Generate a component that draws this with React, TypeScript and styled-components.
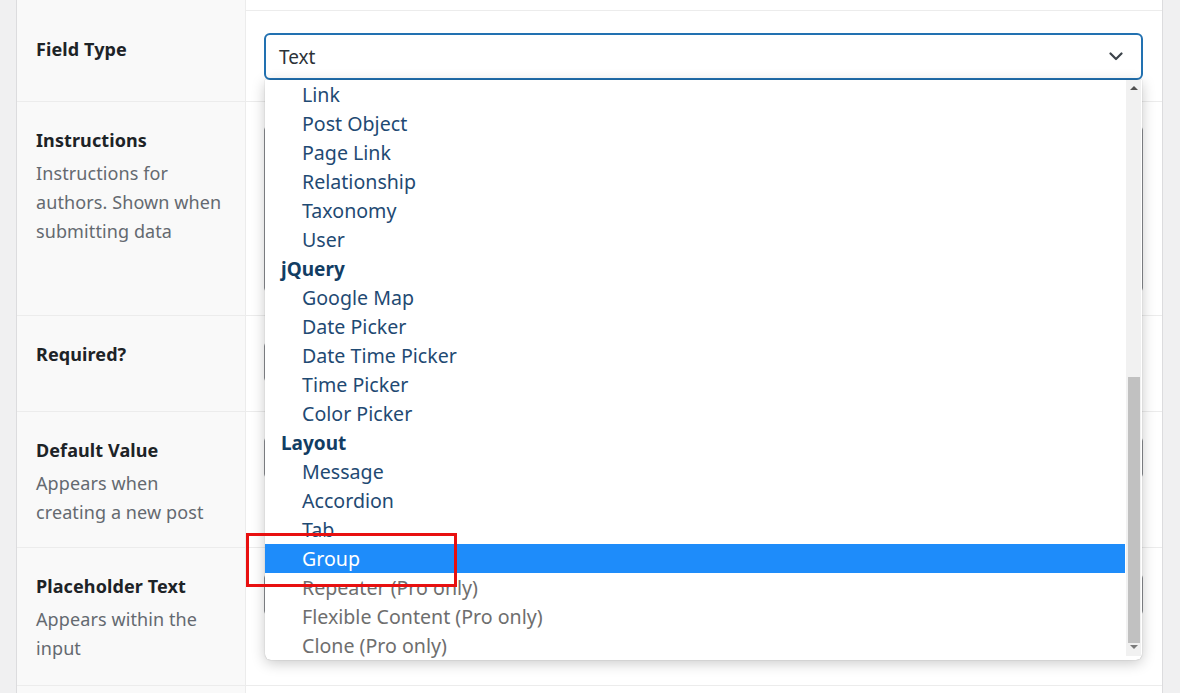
import React from 'react';
import styled, { createGlobalStyle } from 'styled-components';

const GlobalStyle = createGlobalStyle`
  html, body {
    margin: 0;
    padding: 0;
    background: #f0f0f1;
    font-family: "Noto Sans", "Open Sans", sans-serif;
    overflow: hidden;
  }
`;

const Page = styled.div`
  height: 693px;
  overflow: hidden;
  padding-left: 16px;
  padding-right: 17px;
`;

const Panel = styled.div`
  background: #fff;
  border-left: 1px solid #dcdcde;
  border-right: 1px solid #dcdcde;
`;

const Row = styled.div<{ $h: number }>`
  display: grid;
  grid-template-columns: 229px 1fr;
  height: ${p => p.$h}px;
  border-bottom: 1px solid #ececec;
`;

const LabelCell = styled.div`
  background: #f9f9f9;
  border-right: 1px solid #ececec;
  padding: 24px 18px 0 19px;
`;

const LabelTitle = styled.div`
  font-size: 18px;
  line-height: 29px;
  font-weight: 700;
  color: #1d2327;
  letter-spacing: 0.1px;
`;

const LabelHint = styled.div`
  margin-top: 4px;
  font-size: 18px;
  line-height: 29px;
  color: #646970;
  letter-spacing: 0.1px;
`;

const InputCell = styled.div<{ $top?: number }>`
  padding: ${p => p.$top ?? 24}px 19px 0 18px;
  position: relative;
`;

const Input = styled.div<{ $h: number }>`
  height: ${p => p.$h}px;
  border: 1px solid #8c8f94;
  border-radius: 4px;
  box-sizing: border-box;
`;

const Toggle = styled.div`
  width: 80px;
  height: 40px;
  border: 1px solid #8c8f94;
  border-radius: 4px;
  box-sizing: border-box;
`;

const Select = styled.div`
  height: 47px;
  border: 2px solid #2271b1;
  border-radius: 6px;
  box-sizing: border-box;
  display: flex;
  align-items: center;
  justify-content: space-between;
  padding: 0 18px 0 13px;
  font-size: 19px;
  color: #2c3338;
  background: #fff;
`;

const Dropdown = styled.div`
  position: absolute;
  left: 19px;
  top: 69px;
  width: 877px;
  height: 580px;
  background: #fff;
  border-radius: 0 0 6px 6px;
  box-shadow: 0 3px 14px rgba(0, 0, 0, 0.22), 0 0 1px rgba(0, 0, 0, 0.35);
  z-index: 10;
`;

const List = styled.ul`
  margin: 0;
  padding: 0;
  list-style: none;
  width: 860px;
  overflow: hidden;
  height: 580px;
  border-bottom-left-radius: 6px;
`;

const Item = styled.li<{ $kind: 'group' | 'option' | 'pro' | 'active' }>`
  height: 29px;
  line-height: 30px;
  font-size: 19.6px;
  white-space: nowrap;
  padding-left: ${p => (p.$kind === 'group' ? 16 : 37)}px;
  font-weight: ${p => (p.$kind === 'group' ? 700 : 400)};
  font-size: ${p => (p.$kind === 'group' ? 19 : 19.6)}px;
  color: ${p =>
    p.$kind === 'group'
      ? '#123d63'
      : p.$kind === 'pro'
      ? '#6e6e6e'
      : p.$kind === 'active'
      ? '#fff'
      : '#1f4a73'};
  background: ${p => (p.$kind === 'active' ? '#1e8cfa' : 'transparent')};
`;

const ScrollTrack = styled.div`
  position: absolute;
  right: 1px;
  top: 0;
  bottom: 4px;
  width: 15px;
  background: #f1f1f1;
`;

const ScrollThumb = styled.div`
  position: absolute;
  left: 2px;
  right: 1px;
  top: 297px;
  height: 266px;
  background: #c1c1c1;
`;

const Arrow = styled.div<{ $down?: boolean }>`
  position: absolute;
  left: 4px;
  ${p => (p.$down ? 'bottom: 7px;' : 'top: 6px;')}
  width: 0;
  height: 0;
  border-left: 4px solid transparent;
  border-right: 4px solid transparent;
  ${p => (p.$down ? 'border-top: 4px solid #7a7a7a;' : 'border-bottom: 4px solid #505050;')}
`;

const Highlight = styled.div`
  position: absolute;
  left: -19px;
  top: 453px;
  width: 211px;
  height: 54px;
  border: 3px solid #e81010;
  box-sizing: border-box;
  pointer-events: none;
`;

const Chevron = () => (
  <svg width="14" height="9" viewBox="0 0 14 9" fill="none">
    <path d="M1.5 1.5 L7 7 L12.5 1.5" stroke="#3c434a" strokeWidth="2.2" strokeLinecap="round" strokeLinejoin="round" />
  </svg>
);

type Entry = { label: string; kind: 'group' | 'option' | 'pro' | 'active' };

const entries: Entry[] = [
  { label: 'Link', kind: 'option' },
  { label: 'Post Object', kind: 'option' },
  { label: 'Page Link', kind: 'option' },
  { label: 'Relationship', kind: 'option' },
  { label: 'Taxonomy', kind: 'option' },
  { label: 'User', kind: 'option' },
  { label: 'jQuery', kind: 'group' },
  { label: 'Google Map', kind: 'option' },
  { label: 'Date Picker', kind: 'option' },
  { label: 'Date Time Picker', kind: 'option' },
  { label: 'Time Picker', kind: 'option' },
  { label: 'Color Picker', kind: 'option' },
  { label: 'Layout', kind: 'group' },
  { label: 'Message', kind: 'option' },
  { label: 'Accordion', kind: 'option' },
  { label: 'Tab', kind: 'option' },
  { label: 'Group', kind: 'active' },
  { label: 'Repeater (Pro only)', kind: 'pro' },
  { label: 'Flexible Content (Pro only)', kind: 'pro' },
  { label: 'Clone (Pro only)', kind: 'pro' },
];

export default function App() {
  return (
    <>
      <GlobalStyle />
      <Page>
        <Panel>
          <Row $h={10}>
            <LabelCell />
            <div />
          </Row>
          <Row $h={90}>
            <LabelCell>
              <LabelTitle>Field Type</LabelTitle>
            </LabelCell>
            <InputCell $top={22}>
              <Select>
                <span>Text</span>
                <Chevron />
              </Select>
              <Dropdown>
                <List>
                  {entries.map(e => (
                    <Item key={e.label} $kind={e.kind}>
                      {e.label}
                    </Item>
                  ))}
                </List>
                <ScrollTrack>
                  <Arrow />
                  <ScrollThumb />
                  <Arrow $down />
                </ScrollTrack>
                <Highlight />
              </Dropdown>
            </InputCell>
          </Row>
          <Row $h={213}>
            <LabelCell>
              <LabelTitle>Instructions</LabelTitle>
              <LabelHint>Instructions for authors. Shown when submitting data</LabelHint>
            </LabelCell>
            <InputCell>
              <Input $h={166} />
            </InputCell>
          </Row>
          <Row $h={95}>
            <LabelCell>
              <LabelTitle>Required?</LabelTitle>
            </LabelCell>
            <InputCell $top={26}>
              <Toggle />
            </InputCell>
          </Row>
          <Row $h={135}>
            <LabelCell>
              <LabelTitle>Default Value</LabelTitle>
              <LabelHint>Appears when creating a new post</LabelHint>
            </LabelCell>
            <InputCell $top={25}>
              <Input $h={41} />
            </InputCell>
          </Row>
          <Row $h={137}>
            <LabelCell>
              <LabelTitle>Placeholder Text</LabelTitle>
              <LabelHint>Appears within the input</LabelHint>
            </LabelCell>
            <InputCell $top={26}>
              <Input $h={41} />
            </InputCell>
          </Row>
          <Row $h={60}>
            <LabelCell />
            <div />
          </Row>
        </Panel>
      </Page>
    </>
  );
}
